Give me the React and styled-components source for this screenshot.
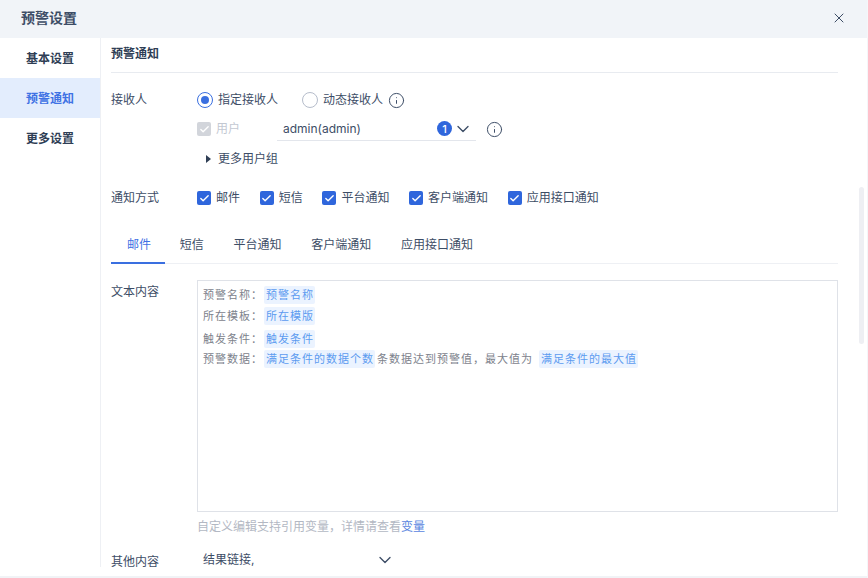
import React from 'react';
import styled, { createGlobalStyle } from 'styled-components';
import { Check, ChevronDown, Info, X } from 'lucide-react';

const GlobalStyle = createGlobalStyle`
  html, body { margin: 0; padding: 0; background: #fff; }
  body {
    font-family: Inter, "Noto Sans CJK SC", sans-serif;
    font-size: 12px;
    line-height: 20px;
    color: #3d4d66;
  }
  * { box-sizing: border-box; }
`;

const channels = ['邮件', '短信', '平台通知', '客户端通知', '应用接口通知'];

const template = [
  { id: 1, top: 0, parts: [{ text: '预警名称：' }, { text: '预警名称', isVar: true }] },
  { id: 2, top: 3, parts: [{ text: '所在模板：' }, { text: '所在模版', isVar: true }] },
  { id: 3, top: 5, parts: [{ text: '触发条件：' }, { text: '触发条件', isVar: true }] },
  {
    id: 4,
    top: 2,
    parts: [
      { text: '预警数据：' },
      { text: '满足条件的数据个数', isVar: true },
      { text: '条数据达到预警值，最大值为', after: 5 },
      { text: '满足条件的最大值', isVar: true },
    ],
  },
];

function App() {
  return (
    <Page>
      <GlobalStyle />
      <Header>
        <Title>预警设置</Title>
        <X size={16} color="#3d4d66" strokeWidth={1.5} />
      </Header>
      <Body>
        <Sidebar>
          <NavItem>基本设置</NavItem>
          <NavItem $active>预警通知</NavItem>
          <NavItem>更多设置</NavItem>
        </Sidebar>
        <Main>
          <SectionTitle>预警通知</SectionTitle>
          <Row $top={17}>
            <Label>接收人</Label>
            <RadioLabel>
              <Radio $checked />
              指定接收人
            </RadioLabel>
            <RadioLabel $left={24}>
              <Radio />
              动态接收人
            </RadioLabel>
            <InfoIcon size={17} strokeWidth={1.4} $left={5} />
          </Row>
          <Row $top={7}>
            <Label />
            <CheckLabel $muted>
              <Box $muted>
                <Check size={11} color="#fff" strokeWidth={3} />
              </Box>
              用户
            </CheckLabel>
            <UserInput>
              <span>admin(admin)</span>
              <Count>1</Count>
              <ChevronDown size={20} color="#3d4d66" strokeWidth={1.6} />
            </UserInput>
            <InfoIcon size={17} strokeWidth={1.4} $left={10} />
          </Row>
          <Row $top={8}>
            <Label />
            <MoreUsers>更多用户组</MoreUsers>
          </Row>
          <Row $top={19}>
            <Label>通知方式</Label>
            <Channels>
              {channels.map((name) => (
                <CheckLabel key={name}>
                  <Box>
                    <Check size={11} color="#fff" strokeWidth={3} />
                  </Box>
                  {name}
                </CheckLabel>
              ))}
            </Channels>
          </Row>
          <Tabs>
            {channels.map((name, i) => (
              <Tab key={name} $active={i === 0}>
                {name}
              </Tab>
            ))}
          </Tabs>
          <EditorRow>
            <Label $pad={2}>文本内容</Label>
            <EditorColumn>
              <Editor>
                {template.map((line) => (
                  <Line key={line.id} $top={line.top}>
                    {line.parts.map((part) =>
                      part.isVar ? (
                        <Var key={part.text}>{part.text}</Var>
                      ) : (
                        <Plain key={part.text} $after={part.after}>
                          {part.text}
                        </Plain>
                      )
                    )}
                  </Line>
                ))}
              </Editor>
              <Hint>
                自定义编辑支持引用变量，详情请查看<HintLink>变量</HintLink>
              </Hint>
            </EditorColumn>
          </EditorRow>
          <Row $top={16}>
            <Label>其他内容</Label>
            <OtherSelect>
              <span>结果链接,</span>
              <ChevronDown size={20} color="#3d4d66" strokeWidth={1.6} />
            </OtherSelect>
          </Row>
        </Main>
        <ScrollThumb />
      </Body>
      <Footer />
    </Page>
  );
}

const Page = styled.div`
  width: 868px;
  height: 578px;
  display: flex;
  flex-direction: column;
  overflow: hidden;
  background: #fff;
  border-right: 1px solid #f5f6f9;
`;

const Header = styled.header`
  height: 38px;
  flex: none;
  display: flex;
  align-items: center;
  justify-content: space-between;
  padding: 0 20px 2px 21px;
  background: #f1f4f8;
`;

const Title = styled.div`
  font-size: 14px;
  font-weight: 700;
  color: #3d4d66;
`;

const Body = styled.div`
  position: relative;
  height: 529px;
  flex: none;
  display: flex;
  overflow: hidden;
`;

const Sidebar = styled.nav`
  width: 101px;
  flex: none;
  border-right: 1px solid #eef0f4;
`;

const NavItem = styled.div`
  height: 40px;
  padding-top: 1px;
  display: flex;
  align-items: center;
  justify-content: center;
  font-size: 12px;
  font-weight: 700;
  color: ${(p) => (p.$active ? '#3f72e4' : '#2f3e55')};
  background: ${(p) => (p.$active ? '#e3edfd' : 'transparent')};
`;

const Main = styled.main`
  flex: 1;
  min-width: 0;
  padding: 0 29px 0 10px;
`;

const SectionTitle = styled.div`
  height: 35px;
  line-height: 31px;
  font-size: 12px;
  font-weight: 700;
  color: #2f3e55;
  border-bottom: 1px solid #e8ebf0;
`;

const Row = styled.div`
  display: flex;
  align-items: center;
  min-height: 20px;
  margin-top: ${(p) => p.$top}px;
`;

const Label = styled.div`
  width: 86px;
  flex: none;
  padding-top: ${(p) => p.$pad || 0}px;
  color: #3d4d66;
`;

const RadioLabel = styled.label`
  display: flex;
  align-items: center;
  gap: 5px;
  margin-left: ${(p) => p.$left || 0}px;
  color: #3d4d66;
`;

const Radio = styled.span`
  width: 16px;
  height: 16px;
  border-radius: 50%;
  border: 1px solid ${(p) => (p.$checked ? '#3a6fe0' : '#b6bdcb')};
  display: flex;
  align-items: center;
  justify-content: center;

  &::after {
    content: '';
    width: 8px;
    height: 8px;
    border-radius: 50%;
    background: ${(p) => (p.$checked ? '#3a6fe0' : 'transparent')};
  }
`;

const InfoIcon = styled(Info)`
  margin-left: ${(p) => p.$left}px;
  color: #3d4d66;
  flex: none;
`;

const CheckLabel = styled.label`
  display: flex;
  align-items: center;
  gap: 5px;
  color: ${(p) => (p.$muted ? '#c3c8d2' : '#3d4d66')};
`;

const Box = styled.span`
  width: 14px;
  height: 14px;
  border-radius: 2px;
  display: flex;
  align-items: center;
  justify-content: center;
  background: ${(p) => (p.$muted ? '#d2d5db' : '#2f66dc')};
`;

const UserInput = styled.div`
  width: 199px;
  height: 24px;
  margin-left: 37px;
  padding: 0 3px 0 6px;
  display: flex;
  align-items: center;
  border-bottom: 1px solid #e3e6ec;
  color: #3d4d66;

  span {
    flex: 1;
  }
`;

const Count = styled.b`
  width: 15px;
  height: 15px;
  margin-right: 1px;
  border-radius: 50%;
  display: flex;
  align-items: center;
  justify-content: center;
  font-size: 11px;
  font-weight: 500;
  color: #fff;
  background: #2f66dc;
`;

const MoreUsers = styled.div`
  position: relative;
  padding-left: 21px;
  color: #3d4d66;

  &::before {
    content: '';
    position: absolute;
    left: 9px;
    top: 6px;
    border-style: solid;
    border-width: 4px 0 4px 5px;
    border-color: transparent transparent transparent #2f3e55;
  }
`;

const Channels = styled.div`
  display: flex;
  gap: 19.7px;
`;

const Tabs = styled.div`
  display: flex;
  height: 38px;
  margin-top: 18px;
  border-bottom: 1px solid #eef0f4;
`;

const Tab = styled.div`
  position: relative;
  height: 38px;
  padding: 0 14.85px;
  line-height: 37px;
  color: ${(p) => (p.$active ? '#3f72e4' : '#3d4d66')};

  &:first-child {
    padding: 0 14px 0 16px;
  }

  ${(p) =>
    p.$active &&
    `&::after {
      content: '';
      position: absolute;
      left: 0;
      right: 0;
      bottom: 0;
      height: 2px;
      background: #3a6fe0;
    }`}
`;

const EditorRow = styled.div`
  display: flex;
  margin-top: 16px;
`;

const EditorColumn = styled.div`
  flex: 1;
  min-width: 0;
`;

const Editor = styled.div`
  height: 232px;
  padding: 5px 5px;
  border: 1px solid #dfe2e8;
  font-size: 11px;
  letter-spacing: 1px;
  color: #7d828c;
`;

const Line = styled.div`
  display: flex;
  align-items: center;
  height: 18px;
  margin-top: ${(p) => p.$top}px;
  white-space: nowrap;
`;

const Plain = styled.span`
  margin-right: ${(p) => p.$after || 0}px;
`;

const Var = styled.span`
  height: 18px;
  line-height: 18px;
  margin: 0 2px 0 1px;
  padding: 0 1px 0 2px;
  border-radius: 2px;
  color: #5c9bf0;
  background: #ebf3ff;
`;

const Hint = styled.div`
  margin-top: 6px;
  line-height: 18px;
  color: #b3b8c3;
`;

const HintLink = styled.span`
  color: #5a86e0;
`;

const OtherSelect = styled.div`
  width: 198px;
  height: 24px;
  padding-left: 6px;
  margin-top: -4px;
  display: flex;
  align-items: center;
  justify-content: space-between;
  color: #3d4d66;
`;

const ScrollThumb = styled.div`
  position: absolute;
  left: 859px;
  top: 149px;
  width: 5px;
  height: 157px;
  border-radius: 3px;
  background: #eeeff3;
`;

const Footer = styled.footer`
  flex: 1;
  border-bottom: 2px solid #f1f3f6;
`;

export default App;
